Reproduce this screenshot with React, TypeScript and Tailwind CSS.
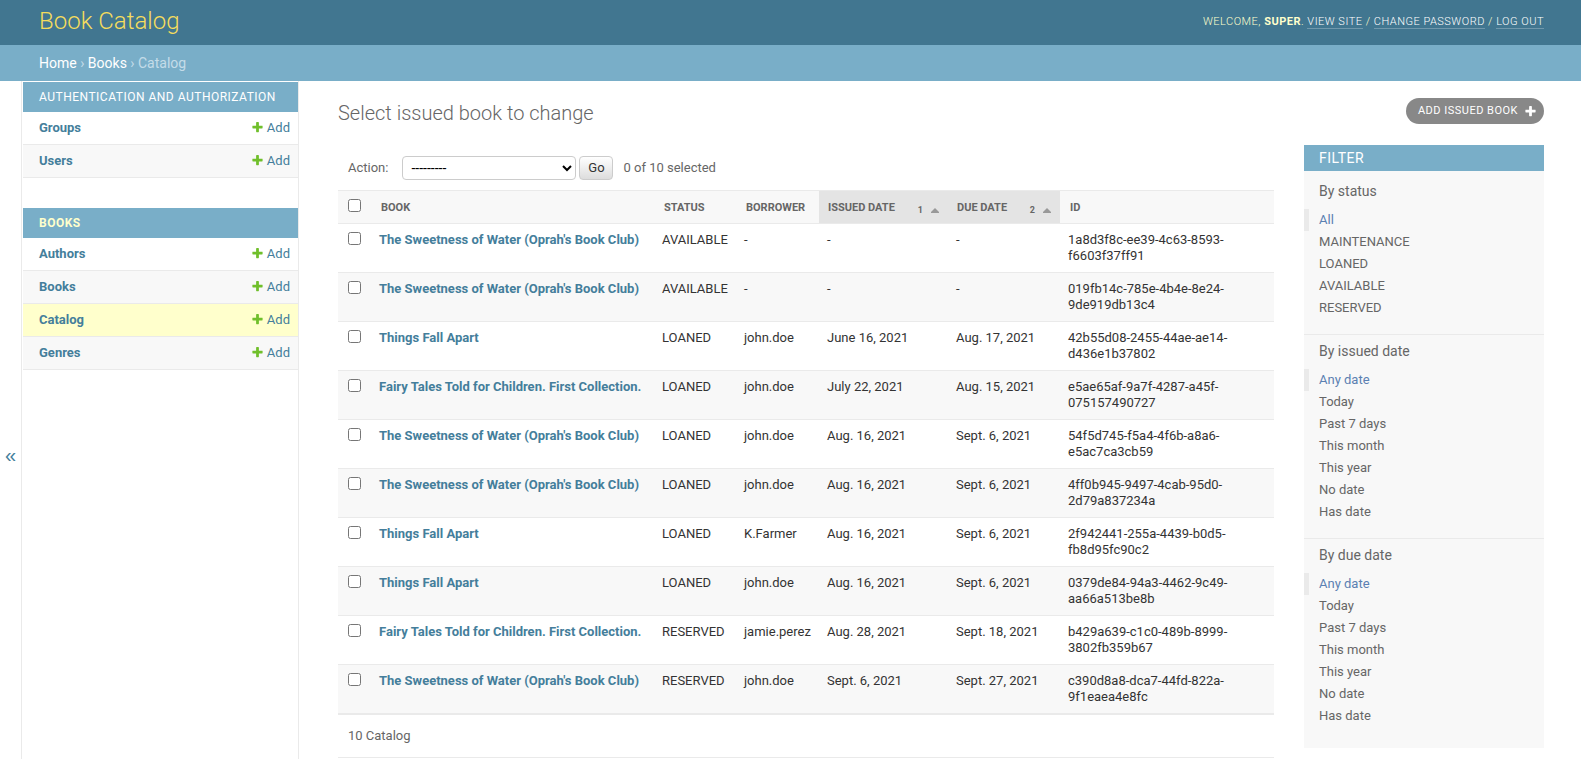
import React from 'react';

type Row = {
  book: string;
  status: string;
  borrower: string;
  issued: string;
  due: string;
  id: string;
};

const WATER = "The Sweetness of Water (Oprah's Book Club)";
const APART = 'Things Fall Apart';
const FAIRY = 'Fairy Tales Told for Children. First Collection.';

const rows: Row[] = [
  { book: WATER, status: 'AVAILABLE', borrower: '-', issued: '-', due: '-', id: '1a8d3f8c-ee39-4c63-8593-f6603f37ff91' },
  { book: WATER, status: 'AVAILABLE', borrower: '-', issued: '-', due: '-', id: '019fb14c-785e-4b4e-8e24-9de919db13c4' },
  { book: APART, status: 'LOANED', borrower: 'john.doe', issued: 'June 16, 2021', due: 'Aug. 17, 2021', id: '42b55d08-2455-44ae-ae14-d436e1b37802' },
  { book: FAIRY, status: 'LOANED', borrower: 'john.doe', issued: 'July 22, 2021', due: 'Aug. 15, 2021', id: 'e5ae65af-9a7f-4287-a45f-075157490727' },
  { book: WATER, status: 'LOANED', borrower: 'john.doe', issued: 'Aug. 16, 2021', due: 'Sept. 6, 2021', id: '54f5d745-f5a4-4f6b-a8a6-e5ac7ca3cb59' },
  { book: WATER, status: 'LOANED', borrower: 'john.doe', issued: 'Aug. 16, 2021', due: 'Sept. 6, 2021', id: '4ff0b945-9497-4cab-95d0-2d79a837234a' },
  { book: APART, status: 'LOANED', borrower: 'K.Farmer', issued: 'Aug. 16, 2021', due: 'Sept. 6, 2021', id: '2f942441-255a-4439-b0d5-fb8d95fc90c2' },
  { book: APART, status: 'LOANED', borrower: 'john.doe', issued: 'Aug. 16, 2021', due: 'Sept. 6, 2021', id: '0379de84-94a3-4462-9c49-aa66a513be8b' },
  { book: FAIRY, status: 'RESERVED', borrower: 'jamie.perez', issued: 'Aug. 28, 2021', due: 'Sept. 18, 2021', id: 'b429a639-c1c0-489b-8999-3802fb359b67' },
  { book: WATER, status: 'RESERVED', borrower: 'john.doe', issued: 'Sept. 6, 2021', due: 'Sept. 27, 2021', id: 'c390d8a8-dca7-44fd-822a-9f1eaea4e8fc' },
];

const dateChoices = ['Any date', 'Today', 'Past 7 days', 'This month', 'This year', 'No date', 'Has date'];

const filters = [
  { title: 'By status', choices: ['All', 'MAINTENANCE', 'LOANED', 'AVAILABLE', 'RESERVED'] },
  { title: 'By issued date', choices: dateChoices },
  { title: 'By due date', choices: dateChoices },
];

const apps = [
  { name: 'Authentication and Authorization', current: false, models: ['Groups', 'Users'] },
  { name: 'Books', current: true, models: ['Authors', 'Books', 'Catalog', 'Genres'] },
];

function PlusIcon({ className }: { className: string }) {
  return (
    <svg className={className} viewBox="0 0 1792 1792" fill="currentColor" aria-hidden="true">
      <path d="M1600 736v192q0 40-28 68t-68 28h-416v416q0 40-28 68t-68 28h-192q-40 0-68-28t-28-68v-416h-416q-40 0-68-28t-28-68v-192q0-40 28-68t68-28h416v-416q0-40 28-68t68-28h192q40 0 68 28t28 68v416h416q40 0 68 28t28 68z" />
    </svg>
  );
}

function Header() {
  const link = 'border-b border-white/25 text-white';
  return (
    <header className="flex h-[45px] items-center justify-between bg-[#417690] pl-[39px] pr-[37px] text-[#ffc]">
      <a href="#" className="pb-1 text-2xl font-light text-[#f5dd5d]">Book Catalog</a>
      <div className="pb-[2px] text-[11px] leading-[14px] font-light tracking-[0.5px] uppercase">
        Welcome, <strong className="font-bold">super</strong>.{' '}
        <a href="#" className={link}>View site</a> / <a href="#" className={link}>Change password</a> /{' '}
        <a href="#" className={link}>Log out</a>
      </div>
    </header>
  );
}

function Sidebar() {
  return (
    <nav aria-label="Sidebar" className="flex w-[276px] shrink-0 flex-col gap-[30px] border-r border-[#eaeaea] pt-px">
      {apps.map((app) => (
        <table key={app.name} className="w-full border-collapse text-[13px] leading-4">
          <caption className="bg-[#79aec8] px-4 py-[7px] text-left text-xs tracking-[0.5px] uppercase">
            <a href="#" className={app.current ? 'font-bold text-[#ffc]' : 'text-white'}>{app.name}</a>
          </caption>
          <tbody>
            {app.models.map((model) => (
              <tr
                key={model}
                className={model === 'Catalog' ? 'bg-[#ffffcc]' : 'even:bg-[#f8f8f8]'}
              >
                <th scope="row" className="border-b border-[#eaeaea] py-2 pl-4 text-left font-bold">
                  <a href="#" className="text-[#447e9b]">{model}</a>
                </th>
                <td className="border-b border-[#eaeaea] py-2 pr-2">
                  <a href="#" className="flex items-start justify-end gap-[3px] text-[#447e9b]">
                    <PlusIcon className="mt-px size-[13px] text-[#70bf2b]" />
                    Add
                  </a>
                </td>
              </tr>
            ))}
          </tbody>
        </table>
      ))}
    </nav>
  );
}

function SortedHeading({ label, priority }: { label: string; priority: number }) {
  return (
    <th scope="col" className="bg-[#e4e4e4] px-[9px] pt-[2px] text-left">
      <span className="flex items-center justify-between">
        <a href="#">{label}</a>
        <span className="flex items-center gap-2 pt-1 text-[9px]">
          {priority}
          <svg className="h-[5px] w-2 text-[#999]" viewBox="0 0 8 5" fill="currentColor" aria-hidden="true">
            <path d="M4 0 8 4V5H0V4z" />
          </svg>
        </span>
      </span>
    </th>
  );
}

function Results() {
  return (
    <table className="w-full table-fixed border-collapse text-[13px] leading-4 text-[#333]">
      <colgroup>
        <col className="w-[33px]" />
        <col className="w-[283px]" />
        <col className="w-[82px]" />
        <col className="w-[83px]" />
        <col className="w-[129px]" />
        <col className="w-[112px]" />
        <col />
      </colgroup>
      <thead>
        <tr className="h-[33px] border-y border-[#eaeaea] bg-[#f8f8f8] text-[11px] font-bold text-[#666] uppercase">
          <th scope="col" className="pl-[10px] text-left">
            <input type="checkbox" aria-label="Select all" className="mb-1 block size-[13px]" />
          </th>
          <th scope="col" className="px-[10px] pt-[2px] text-left"><a href="#">Book</a></th>
          <th scope="col" className="px-[10px] pt-[2px] text-left"><a href="#">Status</a></th>
          <th scope="col" className="px-[10px] pt-[2px] text-left"><a href="#">Borrower</a></th>
          <SortedHeading label="Issued date" priority={1} />
          <SortedHeading label="Due date" priority={2} />
          <th scope="col" className="px-[10px] pt-[2px] text-left"><a href="#">ID</a></th>
        </tr>
      </thead>
      <tbody>
        {rows.map((row) => (
          <tr key={row.id} className="border-b border-[#eaeaea] align-top even:bg-[#f8f8f8]">
            <td className="py-2 pl-[10px]">
              <input type="checkbox" aria-label={'Select ' + row.id} className="block size-[13px]" />
            </td>
            <th scope="row" className="p-2 text-left font-bold">
              <a href="#" className="whitespace-nowrap text-[#447e9b]">{row.book}</a>
            </th>
            <td className="p-2">{row.status}</td>
            <td className="p-2">{row.borrower}</td>
            <td className="p-2">{row.issued}</td>
            <td className="p-2 whitespace-nowrap">{row.due}</td>
            <td className="p-2">{row.id}</td>
          </tr>
        ))}
      </tbody>
    </table>
  );
}

function Filter() {
  return (
    <aside className="w-60 shrink-0 self-start bg-[#f8f8f8] pb-[6px] text-[#666]">
      <h2 className="mb-1 bg-[#79aec8] px-[15px] py-[5px] text-sm leading-4 tracking-[0.5px] text-white uppercase">Filter</h2>
      {filters.map((group) => (
        <section key={group.title} className="border-b border-[#eaeaea] pt-[6px] pb-[15px] last:border-b-0">
          <h3 className="mb-2 px-[15px] text-sm leading-5">{group.title}</h3>
          <ul className="text-[13px] leading-[22px]">
            {group.choices.map((choice, i) => (
              <li
                key={choice}
                className={i === 0 ? 'border-l-[5px] border-[#eaeaea] pl-[10px] text-[#5b80b2]' : 'pl-[15px]'}
              >
                <a href="#">{choice}</a>
              </li>
            ))}
          </ul>
        </section>
      ))}
    </aside>
  );
}

export default function App() {
  return (
    <div className="flex min-h-screen flex-col bg-white font-['Roboto','Liberation_Sans',sans-serif] text-[13px]">
      <Header />
      <nav aria-label="Breadcrumbs" className="bg-[#79aec8] py-2 pr-[37px] pl-[39px] text-sm text-[#c4dce8]">
        <a href="#" className="text-white">Home</a> › <a href="#" className="text-white">Books</a> › Catalog
      </nav>
      <div className="flex flex-1">
        <button
          type="button"
          aria-label="Toggle navigation"
          className="mr-px flex w-[22px] shrink-0 items-center justify-center border-r border-[#eaeaea] pt-[70px] font-['Liberation_Sans',sans-serif] text-xl text-[#447e9b]"
        >
          «
        </button>
        <Sidebar />
        <main className="min-w-0 flex-1 pt-[17px] pr-[37px] pl-[39px]">
          <div className="mb-[21px] flex h-[26px] items-center justify-between">
            <h1 className="pt-1 text-xl font-light text-[#666]">Select issued book to change</h1>
            <a
              href="#"
              className="flex h-[26px] items-center gap-[6px] rounded-full bg-[#888] pr-[7px] pl-3 text-[11px] tracking-[0.5px] text-white uppercase"
            >
              Add issued book
              <PlusIcon className="size-[13px]" />
            </a>
          </div>
          <div className="flex gap-[30px]">
            <div className="min-w-0 flex-1">
              <form className="flex h-[45px] items-center px-[10px] text-[#666]" onSubmit={(e) => e.preventDefault()}>
                <label htmlFor="action" className="mr-[14px]">Action:</label>
                <select
                  id="action"
                  className="h-6 w-[174px] rounded-[4px] border border-[#ccc] bg-white pl-1 text-sm text-black"
                >
                  <option>---------</option>
                </select>
                <button
                  type="submit"
                  className="mr-[10px] ml-[3px] h-6 w-[34px] rounded-[4px] border border-[#ccc] bg-linear-to-b from-white to-[#ddd] text-[13px] text-[#333]"
                >
                  Go
                </button>
                <span>0 of 10 selected</span>
              </form>
              <Results />
              <p className="border-y border-[#eaeaea] px-[10px] py-[13px] leading-4 text-[#666]">10 Catalog</p>
            </div>
            <Filter />
          </div>
        </main>
      </div>
    </div>
  );
}
